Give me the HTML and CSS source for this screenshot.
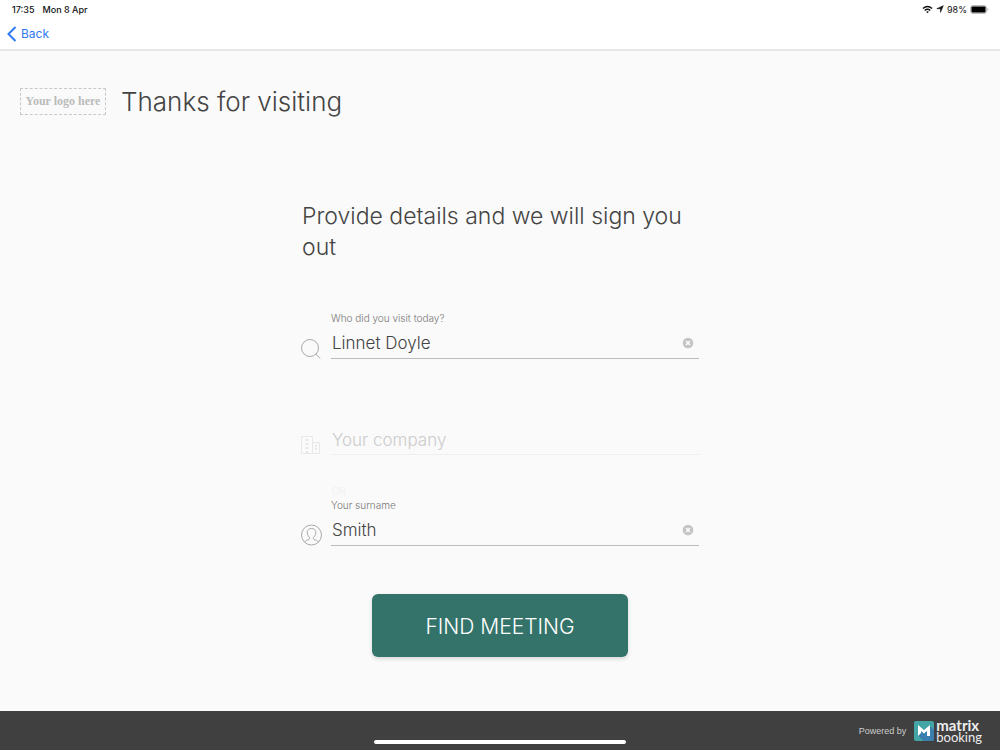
FILE: index.html
```html
<!DOCTYPE html>
<html lang="en">
<head>
<meta charset="utf-8">
<meta name="viewport" content="width=device-width, initial-scale=1">
<title>Thanks for visiting</title>
<link rel="stylesheet" href="styles.css">
</head>
<body>
<header class="topbar">
  <div class="status">
    <span>17:35</span>
    <span>Mon 8 Apr</span>
    <span class="status-right">
      <svg width="11" height="9" viewBox="0 0 12 9" fill="none" stroke="#111" stroke-width="1.5"><path d="M1 3.5Q6-1 11 3.5M3 5.5Q6 2.8 9 5.5"/><path d="M4.500 7Q6 5.800 7.500 7L6 8.700Z" fill="#111" stroke="none"/></svg>
      <svg width="8" height="8" viewBox="0 0 8 8" fill="#111" stroke="#111" stroke-width=".6"><path d="M7.300.7L4.500 7.300V3.700H.8Z"/></svg>
      <span>98%</span>
      <svg width="19" height="9" viewBox="0 0 19 9"><rect x=".5" y=".5" width="16" height="8" rx="2.500" fill="#ddd" stroke="#bbb"/><rect x="1.500" y="1.500" width="14" height="6" rx="1" fill="#000"/><path d="M17.500 3Q19.500 4.500 17.500 6Z" fill="#aaa"/></svg>
    </span>
  </div>
  <nav class="nav">
    <a class="back" href="#"><svg width="10" height="16" viewBox="0 0 10 16" fill="none" stroke="#2f7af0" stroke-width="2"><path d="M8.500 1L1.500 8L8.500 15"/></svg>Back</a>
  </nav>
</header>
<main class="main">
  <div class="brand">
    <div class="logo">Your logo here</div>
    <h1 class="title">Thanks for visiting</h1>
  </div>
  <form class="form">
    <h2 class="prompt">Provide details and we will sign you out</h2>
    <div class="field field-host">
      <svg class="icon" width="21" height="21" viewBox="0 0 21 21" fill="none" stroke="#aaa"><circle cx="9" cy="10" r="8.500"/><path d="M15 16L19 20.500"/></svg>
      <div class="field-body">
        <label class="label" for="host">Who did you visit today?</label>
        <div class="line"><input class="input" id="host" type="text" value="Linnet Doyle"><button class="clear" type="button" aria-label="Clear host"><svg width="12" height="12" viewBox="0 0 12 12"><circle cx="6" cy="6" r="5.300" fill="#c4c4c4"/><path d="M4 4L8 8M8 4L4 8" stroke="#fff" stroke-width="1.300"/></svg></button></div>
      </div>
    </div>
    <div class="field field-company">
      <svg class="icon" width="21" height="20" viewBox="0 0 21 20" fill="none" stroke="#e8e8e8"><path d="M.5 18.500V1.500H11.500V18.500ZM11.500 7.500H18.500V18.500H11.500"/><path d="M4.500 5H7.500M4.500 9H7.500M4.500 13H7.500M6 16V18M14 11H16M14 14H16" stroke-width="2"/></svg>
      <div class="field-body">
        <div class="line"><input class="input" id="company" type="text" placeholder="Your company" aria-label="Your company"></div>
      </div>
    </div>
    <div class="or">OR</div>
    <div class="field field-surname">
      <svg class="icon" width="22" height="22" viewBox="0 0 22 22" fill="none" stroke="#aaa"><circle cx="10.500" cy="11" r="10"/><path d="M3.500 18C4.500 16.500 6.500 16 8 15.500C9 15 8.800 13.500 8 12.800C6.800 11.500 6 9.500 6.300 7.500C6.700 5.500 8.300 4.500 10.500 4.500S14.300 5.500 14.700 7.500C15 9.500 14.200 11.500 13 12.800C12.200 13.500 12 15 13 15.500C14.500 16 16.500 16.500 17.500 18"/></svg>
      <div class="field-body">
        <label class="label" for="surname">Your surname</label>
        <div class="line"><input class="input" id="surname" type="text" value="Smith"><button class="clear" type="button" aria-label="Clear surname"><svg width="12" height="12" viewBox="0 0 12 12"><circle cx="6" cy="6" r="5.300" fill="#c4c4c4"/><path d="M4 4L8 8M8 4L4 8" stroke="#fff" stroke-width="1.300"/></svg></button></div>
      </div>
    </div>
    <button class="submit" type="button">FIND MEETING</button>
  </form>
</main>
<footer class="footer">
  <span class="home"></span>
  <span class="powered">Powered by</span>
  <svg class="mark" width="20" height="20" viewBox="0 0 20 20"><rect width="20" height="20" rx="2" fill="#43a5a5"/><path d="M4 14.500L9 9L16 5L20 9V18Q20 20 18 20H9.500Z" fill="#3c7fae"/><path d="M4 4L10 9L16 4V15H13V10L10 12.500L7 10V12L4 15Z" fill="#fff"/></svg>
  <span class="wordmark"><span class="word-bold">matrix</span><span class="word-thin">booking</span></span>
</footer>
</body>
</html>
```
FILE: styles.css
```css
* { box-sizing: border-box; }
body {
  margin: 0;
  min-height: 100vh;
  display: flex;
  flex-direction: column;
  background: #fafafa;
  color: #444;
  font-family: Inter, "Liberation Sans", sans-serif;
  font-weight: 300;
}
.topbar { background: #fff; border-bottom: 2px solid #e6e6e6; }
.status {
  display: flex;
  gap: 8px;
  height: 18px;
  padding: 0 11px 0 12px;
  align-items: center;
  color: #111;
  font-size: 9px;
  font-weight: 500;
}
.status-right { display: flex; align-items: center; gap: 3px; margin-left: auto; font-weight: 400; }
.nav { display: flex; align-items: center; height: 31px; padding: 0 7px; }
.back {
  display: flex;
  align-items: center;
  gap: 4px;
  color: #2f7af0;
  font-size: 12px;
  font-weight: 400;
  text-decoration: none;
}
.main { flex: 1; padding: 34px 20px 40px; }
.brand { display: flex; align-items: center; gap: 15px; height: 33px; }
.logo {
  width: 86px;
  height: 27px;
  border: 1px dashed #c8c8c8;
  color: #bbb;
  font: bold 12px/24px "Liberation Serif", serif;
  text-align: center;
  white-space: nowrap;
}
.title { margin: 0; font-size: 26px; line-height: 33px; font-weight: 300; }
.form { display: flex; flex-direction: column; width: 100%; max-width: 398px; margin: 83px auto 0; }
.prompt { margin: 0; padding-left: 1px; font-size: 23px; line-height: 31px; font-weight: 300; }
.field { display: flex; align-items: flex-end; gap: 9px; }
.icon { flex: none; }
.field-body { flex: 1; min-width: 0; }
.field-host { margin-top: 48px; }
.field-company { margin-top: 66px; }
.field-surname { gap: 8px; }
.label { display: block; font-size: 10px; line-height: 14px; color: #777; }
.line {
  display: flex;
  align-items: center;
  height: 34px;
  padding: 2px 5px 0 0;
  border-bottom: 1px solid #bbb;
}
.input {
  flex: 1;
  min-width: 0;
  height: 28px;
  padding: 0 1px;
  border: 0;
  background: none;
  color: #444;
  font: inherit;
  font-size: 17px;
}
.input::placeholder { color: #ccc; opacity: 1; }
.field-company .line { height: 30px; padding-top: 0; border-color: #eee; }
.clear { display: flex; padding: 0; border: 0; background: none; }
.or { margin-top: 29px; padding-left: 31px; color: #f0f0f0; font-size: 10px; line-height: 14px; }
.submit {
  align-self: center;
  width: 256px;
  height: 63px;
  margin-top: 48px;
  padding: 2px 0 0;
  border: 0;
  border-radius: 6px;
  background: #34736a;
  box-shadow: 0 2px 4px #0002;
  color: #fff;
  font: inherit;
  font-size: 21px;
}
.footer {
  position: relative;
  flex: none;
  display: flex;
  align-items: center;
  justify-content: flex-end;
  gap: 8px;
  height: 39px;
  padding-right: 18px;
  background: #404040;
  color: #eee;
}
.home {
  position: absolute;
  left: 50%;
  bottom: 6px;
  width: 252px;
  height: 4px;
  margin-left: -126px;
  border-radius: 2px;
  background: #fff;
}
.powered { color: #ccc; font: 9px "Liberation Sans", Arial, sans-serif; }
.wordmark { display: flex; flex-direction: column; margin-left: -6px; font: 13px/12px Lato, sans-serif; }
.word-bold { font-size: 15px; font-weight: 700; }
.word-thin { font-weight: 400; }
```
